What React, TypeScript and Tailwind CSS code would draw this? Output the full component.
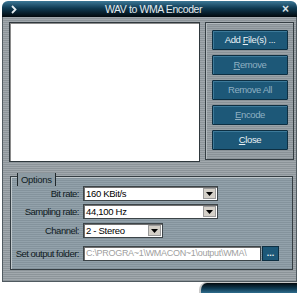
import React from 'react';

const stripes =
  'bg-[repeating-linear-gradient(to_bottom,#a1a8ad_0px,#a1a8ad_1px,#8c9499_1px,#8c9499_2px)]';

function Btn({ label, u, rest, dim }: { label?: string; u: string; rest: string; dim?: boolean }) {
  return (
    <button
      className={`h-[20px] w-[76px] rounded-[1px] border border-[#0d2f42] bg-[#1d5878] text-[9.5px] leading-none tracking-[-0.4px] shadow-[inset_1px_1px_0_#3d7a9a] ${
        dim ? 'text-[#8fb0c2]' : 'text-[#e8f0f4]'
      }`}
    >
      {label}
      <span className="underline">{u}</span>
      {rest}
    </button>
  );
}

function Select({ value, w }: { value: string; w: string }) {
  return (
    <div className={`flex h-[15px] ${w} items-stretch border border-[#3c4448] bg-white shadow-[inset_1px_1px_0_#707070]`}>
      <span className="flex-1 pl-[2px] text-[9.5px] leading-[13px] tracking-[-0.3px] text-black">{value}</span>
      <span className="m-[1px] flex w-[13px] items-center justify-center border border-[#9a9a9a] bg-[#d4d0c8]">
        <svg width="7" height="4" viewBox="0 0 7 4">
          <path d="M0 0h7L3.5 4z" fill="#000" />
        </svg>
      </span>
    </div>
  );
}

function Row({ label, children, mt }: { label: string; children: React.ReactNode; mt: string }) {
  return (
    <div className={`flex items-center ${mt}`}>
      <span className="w-[68px] pr-[4px] text-right text-[9.5px] leading-none tracking-[-0.5px] text-[#0f1a22] whitespace-nowrap">
        {label}
      </span>
      {children}
    </div>
  );
}

export default function App() {
  return (
    <div className="h-[296px] w-[300px] overflow-hidden bg-white font-['Liberation_Sans',Arial,sans-serif]">
      <div className="ml-[2px] w-[295px]">
        {/* title bar */}
        <div className="relative mt-[1px] flex h-[16px] items-center justify-center rounded-t-[6px] bg-[linear-gradient(to_bottom,#3c7897_0%,#0f3a52_45%,#02080c_100%)]">
          <svg className="absolute left-[9px] top-[4px]" width="6" height="9" viewBox="0 0 6 9">
            <path d="M1 1l3.5 3.5L1 8" stroke="#e6eef2" strokeWidth="1.8" fill="none" />
          </svg>
          <span className="pl-[8px] text-[10.5px] leading-none tracking-[-0.4px] text-[#e4ecf0]">WAV to WMA Encoder</span>
          <span className="absolute right-[8px] top-[1px] text-[12px] font-bold leading-[14px] text-[#d8e2e8]">×</span>
        </div>

        {/* body */}
        <div className={`${stripes} h-[265px] border-x border-b border-[#505a60] pl-[6px] pt-[5px]`}>
          <div className="flex">
            <div className="h-[140px] w-[191px] border border-[#2f383d] bg-white shadow-[inset_1px_1px_0_#8a8a8a]" />
            <div className="ml-[5px] flex h-[138px] w-[89px] flex-col gap-[5px] border border-[#353e43] bg-[repeating-linear-gradient(to_bottom,#9ca4a9_0px,#9ca4a9_1px,#8a9297_1px,#8a9297_2px)] pl-[6px] pt-[7px] shadow-[inset_1px_1px_0_#b4bbbf]">
              <Btn label="Add " u="F" rest="ile(s) ..." />
              <Btn u="R" rest="emove" dim />
              <Btn label="Remove All" u="" rest="" dim />
              <Btn u="E" rest="ncode" dim />
              <Btn u="C" rest="lose" />
            </div>
          </div>

          {/* options */}
          <div className="relative ml-[1px] mt-[14px] h-[94px] w-[283px] border border-[#353e43] bg-[repeating-linear-gradient(to_bottom,#93a2ab_0px,#93a2ab_1px,#84939c_1px,#84939c_2px)] pl-[4px] pt-[9px] shadow-[inset_1px_1px_0_#c0c8cc]">
            <span className="absolute left-[6px] top-[-4px] flex h-[13px] items-center border-x border-[#20282c] bg-[#8c9aa2] px-[3px] text-[9.5px] leading-none tracking-[-0.3px] text-[#0f1a22]">
              Options
            </span>
            <Row label="Bit rate:" mt="mt-0">
              <Select value="160 KBit/s" w="w-[135px]" />
            </Row>
            <Row label="Sampling rate:" mt="mt-[3px]">
              <Select value="44,100 Hz" w="w-[135px]" />
            </Row>
            <Row label="Channel:" mt="mt-[4px]">
              <Select value="2 - Stereo" w="w-[80px]" />
            </Row>
            <Row label="Set output folder:" mt="mt-[8px]">
              <div className="flex h-[15px] w-[178px] items-center overflow-hidden border border-[#3c4448] bg-white pl-[2px] shadow-[inset_1px_1px_0_#707070]">
                <span className="text-[9px] leading-none tracking-[-0.3px] whitespace-nowrap text-[#a0a0a0]">
                  C:\PROGRA~1\WMACON~1\output\WMA\
                </span>
              </div>
              <button className="ml-[1px] h-[15px] w-[17px] border border-[#0d2f42] bg-[#1d5878] text-[9px] font-bold leading-none text-[#e8f0f4]">
                ...
              </button>
            </Row>
          </div>
        </div>

        {/* bottom tab */}
        <div className="flex">
          <div className="w-[197px]" />
          <div className="h-[11px] flex-1 rounded-tl-[8px] border-l-2 border-t border-[#c8c8c8] bg-[linear-gradient(to_bottom,#02080c_0%,#0f3a52_55%,#2e6c8c_100%)]" />
        </div>
      </div>
    </div>
  );
}
